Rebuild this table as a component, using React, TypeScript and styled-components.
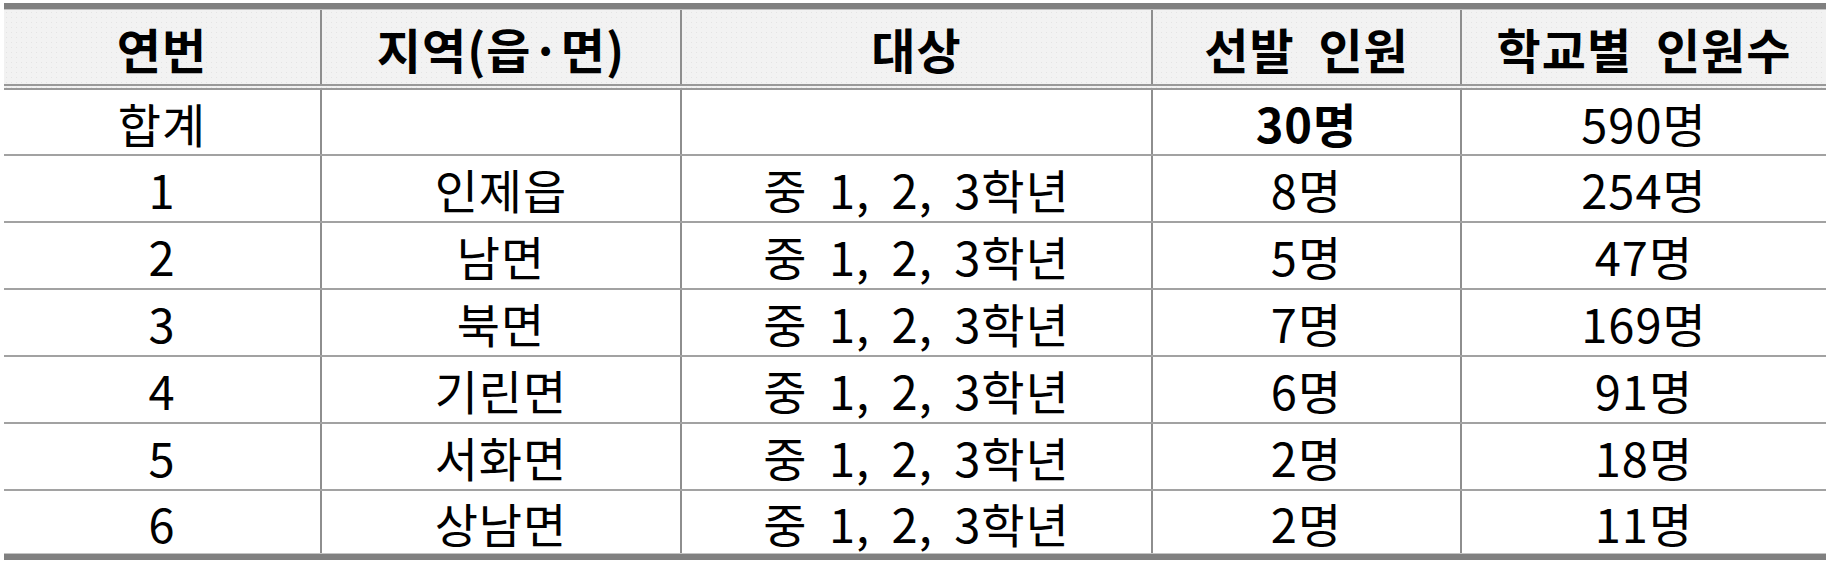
import React from "react";
import styled, { createGlobalStyle } from "styled-components";

const Global = createGlobalStyle`
  html, body { margin: 0; padding: 0; background: #ffffff; }
  body { font-family: "Noto Sans CJK KR", "Noto Sans", sans-serif; }
`;

const Page = styled.div`
  padding: 3px 0 0 4px;
  width: 1822px;
`;

const Table = styled.div`
  width: 1822px;
  border-top: 6px solid #808080;
  border-bottom: 6px solid #808080;
  display: flex;
  flex-direction: column;
`;

const HeaderRow = styled.div`
  display: grid;
  grid-template-columns: 316px 360px 471px 309px 366px;
  box-sizing: border-box;
  border-top: 1px solid #c4c4c4;
  border-bottom: 6px double #999999;
  height: 81px;
  background-color: #f2f2f2;
  background-image: radial-gradient(#e4e4e4 0.7px, transparent 0.9px);
  background-size: 5px 5px;
`;

const Row = styled.div<{ $h: number; $last?: boolean }>`
  display: grid;
  grid-template-columns: 316px 360px 471px 309px 366px;
  box-sizing: content-box;
  height: ${(p) => p.$h}px;
  border-bottom: ${(p) => (p.$last ? "1px solid #c4c4c4" : "2px solid #a2a2a2")};
`;

const Cell = styled.div<{ $first?: boolean; $bold?: boolean; $head?: boolean; $ws?: number }>`
  display: flex;
  align-items: center;
  justify-content: center;
  box-sizing: border-box;
  border-left: ${(p) => (p.$first ? "none" : "2px solid #8e8e8e")};
  font-family: "Noto Sans CJK KR", "Noto Sans", sans-serif;
  font-size: ${(p) => (p.$head ? 48 : 47)}px;
  font-weight: ${(p) => (p.$bold || p.$head ? 700 : 400)};
  color: #000000;
  white-space: pre;
  word-spacing: ${(p) => p.$ws ?? 0}px;
  letter-spacing: 1px;
  line-height: 1;
  padding-top: ${(p) => (p.$head ? 2 : 0)}px;
`;

const headers = ["연번", "지역(읍·면)", "대상", "선발 인원", "학교별 인원수"];

const rows: { no: string; area: string; target: string; sel: string; total: string; bold?: boolean }[] = [
  { no: "합계", area: "", target: "", sel: "30명", total: "590명", bold: true },
  { no: "1", area: "인제읍", target: "중 1, 2, 3학년", sel: "8명", total: "254명" },
  { no: "2", area: "남면", target: "중 1, 2, 3학년", sel: "5명", total: "47명" },
  { no: "3", area: "북면", target: "중 1, 2, 3학년", sel: "7명", total: "169명" },
  { no: "4", area: "기린면", target: "중 1, 2, 3학년", sel: "6명", total: "91명" },
  { no: "5", area: "서화면", target: "중 1, 2, 3학년", sel: "2명", total: "18명" },
  { no: "6", area: "상남면", target: "중 1, 2, 3학년", sel: "2명", total: "11명" },
];

const heights = [64, 65, 65, 65, 65, 65, 62];

export default function App() {
  return (
    <>
      <Global />
      <Page>
        <Table>
          <HeaderRow>
            {headers.map((h, i) => (
              <Cell key={h} $first={i === 0} $head $ws={i >= 3 ? 12 : 0}>
                {h}
              </Cell>
            ))}
          </HeaderRow>
          {rows.map((r, i) => (
            <Row key={r.no} $h={heights[i]} $last={i === rows.length - 1}>
              <Cell $first>{r.no}</Cell>
              <Cell>{r.area}</Cell>
              <Cell $ws={10}>{r.target}</Cell>
              <Cell $bold={r.bold}>{r.sel}</Cell>
              <Cell>{r.total}</Cell>
            </Row>
          ))}
        </Table>
      </Page>
    </>
  );
}
